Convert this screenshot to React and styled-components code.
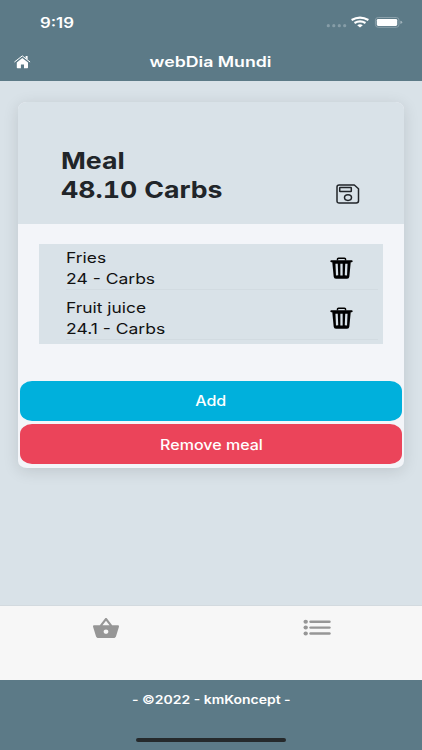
import React, { useState } from "react";
import styled, { createGlobalStyle } from "styled-components";

const GlobalStyle = createGlobalStyle`
  * {
    box-sizing: border-box;
  }
  body {
    margin: 0;
    font-family: Inter, "Liberation Sans", sans-serif;
    background: #d9e2e8;
  }
`;

const initialItems = [
  { id: 1, name: "Fries", carbs: 24 },
  { id: 2, name: "Fruit juice", carbs: 24.1 }
];

const HomeIcon = () => (
  <svg width="17" height="14" viewBox="0 0 17 14" fill="#fff">
    <path d="M8.3 3 14 7.6v5q0 .6-.7.6h-3.3V9.4H6.9v3.8H3.500q-.7 0-.7-.6v-5z" />
    <path
      d="M.7 6.8 8.3.9l7.500 5.900"
      fill="none"
      stroke="#fff"
      strokeWidth="1"
      strokeLinecap="round"
      strokeLinejoin="round"
    />
    <path d="M11.600 1.100h2v3.600l-2-1.600z" />
  </svg>
);

const StatusIcons = () => (
  <svg width="78" height="14" viewBox="0 0 78 14">
    <g fill="#869da7">
      <circle cx="3.3" cy="10.7" r="1.6" />
      <circle cx="8.8" cy="10.7" r="1.6" />
      <circle cx="14.3" cy="10.7" r="1.6" />
      <circle cx="19.7" cy="10.7" r="1.6" />
    </g>
    <g fill="none" stroke="#fff" strokeWidth="2.1">
      <path d="M26.6 5q8.4-4.8 16.8 0" />
      <path d="M29.5 8q5.5-3.3 11 0" />
    </g>
    <path d="M32.2 10.2q2.8-1.7 5.6 0L35 12.6z" fill="#fff" />
    <rect
      x="50.4"
      y="2.5"
      width="23.6"
      height="9.8"
      rx="2.8"
      fill="none"
      stroke="#8aa0aa"
    />
    <rect x="51.8" y="3.9" width="20.4" height="7" rx="1.4" fill="#fff" />
    <path d="M75.4 5.7q1.8.4 1.8 1.6t-1.8 1.6z" fill="#a3b4bc" />
  </svg>
);

const SaveIcon = () => (
  <svg
    width="24"
    height="20"
    viewBox="0 0 24 20"
    fill="none"
    stroke="#212529"
    strokeWidth="1.5"
    strokeLinejoin="round"
  >
    <path d="M3.2 1h15.1l4.2 3.7v12.4q0 1.9-2.3 1.9H3.2Q1 19 1 17.1V2.9Q1 1 3.2 1z" />
    <rect x="3.7" y="3.5" width="11.6" height="4" rx=".5" />
    <ellipse cx="12" cy="13.6" rx="3.5" ry="2.8" />
  </svg>
);

const TrashIcon = () => (
  <svg width="23" height="22" viewBox="0 0 23 22">
    <path
      d="M7.5 3.500V2.100q0-.9 1-.9h6q1 0 1 .9v1.400"
      fill="none"
      stroke="#000"
      strokeWidth="1.5"
    />
    <rect x=".4" y="3.2" width="22.2" height="2" rx=".8" />
    <path d="M2.2 4.500h18.600l-1.500 15.300q-.2 1.900-2.300 1.900H6q-2.100 0-2.300-1.900z" />
    <path
      d="m6.600 6.800.5 11.600M11.500 6.800v11.600m4.900-11.600-.5 11.600"
      stroke="#d9e2e8"
      strokeWidth="2.3"
    />
  </svg>
);

const BasketIcon = () => (
  <svg
    width="26"
    height="20"
    viewBox="1 2 22 19"
    preserveAspectRatio="none"
    fill="#969696"
  >
    <path d="M17.21 9l-4.38-6.56c-.19-.28-.51-.42-.83-.42-.32 0-.64.14-.83.43L6.79 9H2c-.55 0-1 .45-1 1 0 .09.01.18.04.27l2.54 9.27c.23.84 1 1.46 1.92 1.46h13c.92 0 1.69-.62 1.93-1.46l2.54-9.27L23 10c0-.55-.45-1-1-1h-4.79zM9 9l3-4.4L15 9H9zm3 8c-1.1 0-2-.9-2-2s.9-2 2-2 2 .9 2 2-.9 2-2 2z" />
  </svg>
);

const ListIcon = () => (
  <svg width="28" height="18" viewBox="0 0 28 18" fill="#969696">
    {[3.7, 9.6, 15.5].map(y => (
      <g key={y}>
        <ellipse cx="2.7" cy={y} rx="2.2" ry="2" />
        <rect x="6.3" y={y - 1.2} width="21.4" height="2.4" rx="1.2" />
      </g>
    ))}
  </svg>
);

const App = () => {
  const [items, setItems] = useState(initialItems);
  const onRemove = id => setItems(items.filter(item => item.id !== id));
  const total = items.reduce((sum, item) => sum + item.carbs, 0);

  return (
    <>
      <GlobalStyle />
      <Screen>
        <Header>
          <StatusBar>
            <Wide size={14} weight={600} stretch={1.2}>
              9:19
            </Wide>
            <StatusIcons />
          </StatusBar>
          <Navbar>
            <HomeIcon />
            <Wide size={14.4} weight={600} stretch={1.23} origin="center">
              webDia Mundi
            </Wide>
          </Navbar>
        </Header>
        <Content>
          <Card>
            <CardHeader>
              <Title>
                <Wide size={23.4} weight={700} stretch={1.14} tabular>
                  Meal
                </Wide>
                <Wide size={23.4} weight={700} stretch={1.14} tabular>
                  {total.toFixed(2)} Carbs
                </Wide>
              </Title>
              <SaveIcon />
            </CardHeader>
            <List>
              {items.map(item => (
                <Row key={item.id}>
                  <RowText>
                    <Wide size={14.6} stretch={1.19}>
                      {item.name}
                    </Wide>
                    <Wide size={14.6} stretch={1.2}>
                      {item.carbs} - Carbs
                    </Wide>
                  </RowText>
                  <IconButton onClick={() => onRemove(item.id)}>
                    <TrashIcon />
                  </IconButton>
                </Row>
              ))}
            </List>
            <Buttons>
              <Button color="#00b0dc">
                <Wide size={14.2} weight={500} stretch={1.13} origin="center">
                  Add
                </Wide>
              </Button>
              <Button color="#eb445a" onClick={() => setItems([])}>
                <Wide size={14.2} weight={500} stretch={1.13} origin="center">
                  Remove meal
                </Wide>
              </Button>
            </Buttons>
          </Card>
        </Content>
        <TabBar>
          <Tab>
            <BasketIcon />
          </Tab>
          <Tab>
            <ListIcon />
          </Tab>
        </TabBar>
        <Footer>
          <Wide size={11.7} weight={600} stretch={1.195} origin="center">
            - ©2022 - kmKoncept -
          </Wide>
          <HomeIndicator />
        </Footer>
      </Screen>
    </>
  );
};

const Screen = styled.div`
  width: 422px;
  height: 750px;
  display: flex;
  flex-direction: column;
  overflow: hidden;
  background: #d9e2e8;
`;

const Wide = styled.span.withConfig({
  shouldForwardProp: prop => prop === "children"
})`
  display: block;
  white-space: nowrap;
  font-size: ${props => props.size}px;
  font-weight: ${props => props.weight || 400};
  font-variant-numeric: ${props => (props.tabular ? "tabular-nums" : "normal")};
  transform: scaleX(${props => props.stretch});
  transform-origin: ${props => props.origin || "left"};
`;

const Header = styled.header`
  height: 81px;
  flex: none;
  color: #fff;
  background: #5c7a87;
`;

const StatusBar = styled.div`
  height: 44px;
  padding: 0 19px 0 39.5px;
  display: flex;
  align-items: center;
  justify-content: space-between;
`;

const Navbar = styled.nav`
  height: 35px;
  padding: 0 14px;
  display: grid;
  grid-template-columns: 17px 1fr 17px;
  align-items: center;
  justify-items: center;
`;

const Content = styled.main`
  flex: 1;
  padding: 21px 18px 0 17.5px;
`;

const Card = styled.section`
  height: 365.5px;
  display: flex;
  flex-direction: column;
  border-radius: 9px / 7px;
  overflow: hidden;
  background: #f3f5f9;
  box-shadow: 0 3px 16px rgba(0, 0, 0, 0.12);
`;

const CardHeader = styled.div`
  height: 122px;
  flex: none;
  padding: 0 44.5px 20px 43.5px;
  display: flex;
  align-items: flex-end;
  justify-content: space-between;
  color: #212529;
  background: #d9e2e8;
`;

const Title = styled.div`
  line-height: 29px;
`;

const List = styled.div`
  margin: 20px 21.5px 0;
  height: 99.5px;
  background: #d9e2e8;
`;

const Row = styled.div`
  height: 50px;
  margin-left: 27px;
  margin-right: 5px;
  padding-right: 25px;
  display: flex;
  justify-content: space-between;
  background: linear-gradient(#d2dbe1, #d2dbe1) 0 45px / 100% 1px no-repeat;
`;

const RowText = styled.div`
  padding-top: 4px;
  line-height: 20.5px;
  color: #111;
`;

const IconButton = styled.button`
  height: 22px;
  margin-top: 13px;
  padding: 0;
  border: none;
  background: none;
  cursor: pointer;
`;

const Buttons = styled.div`
  margin-top: auto;
  padding: 0 2px 3.5px 2.5px;
  display: flex;
  flex-direction: column;
  gap: 3.5px;
`;

const Button = styled.button`
  height: 39.75px;
  padding: 0;
  border: none;
  border-radius: 12px / 10px;
  display: flex;
  align-items: center;
  justify-content: center;
  font-family: inherit;
  color: #fff;
  background: ${props => props.color};
  cursor: pointer;
`;

const TabBar = styled.div`
  height: 75px;
  flex: none;
  display: grid;
  grid-template-columns: 1fr 1fr;
  border-top: 1px solid #d3dadf;
  background: #f7f7f7;
`;

const Tab = styled.div`
  padding-top: 11.5px;
  display: flex;
  align-items: flex-start;
  justify-content: center;
`;

const Footer = styled.footer`
  height: 70px;
  flex: none;
  padding: 13px 0 8px;
  display: flex;
  flex-direction: column;
  align-items: center;
  justify-content: space-between;
  color: #fff;
  background: #5c7a87;
`;

const HomeIndicator = styled.div`
  width: 150px;
  height: 4px;
  border-radius: 2px;
  background: #25292b;
`;

export default App;
